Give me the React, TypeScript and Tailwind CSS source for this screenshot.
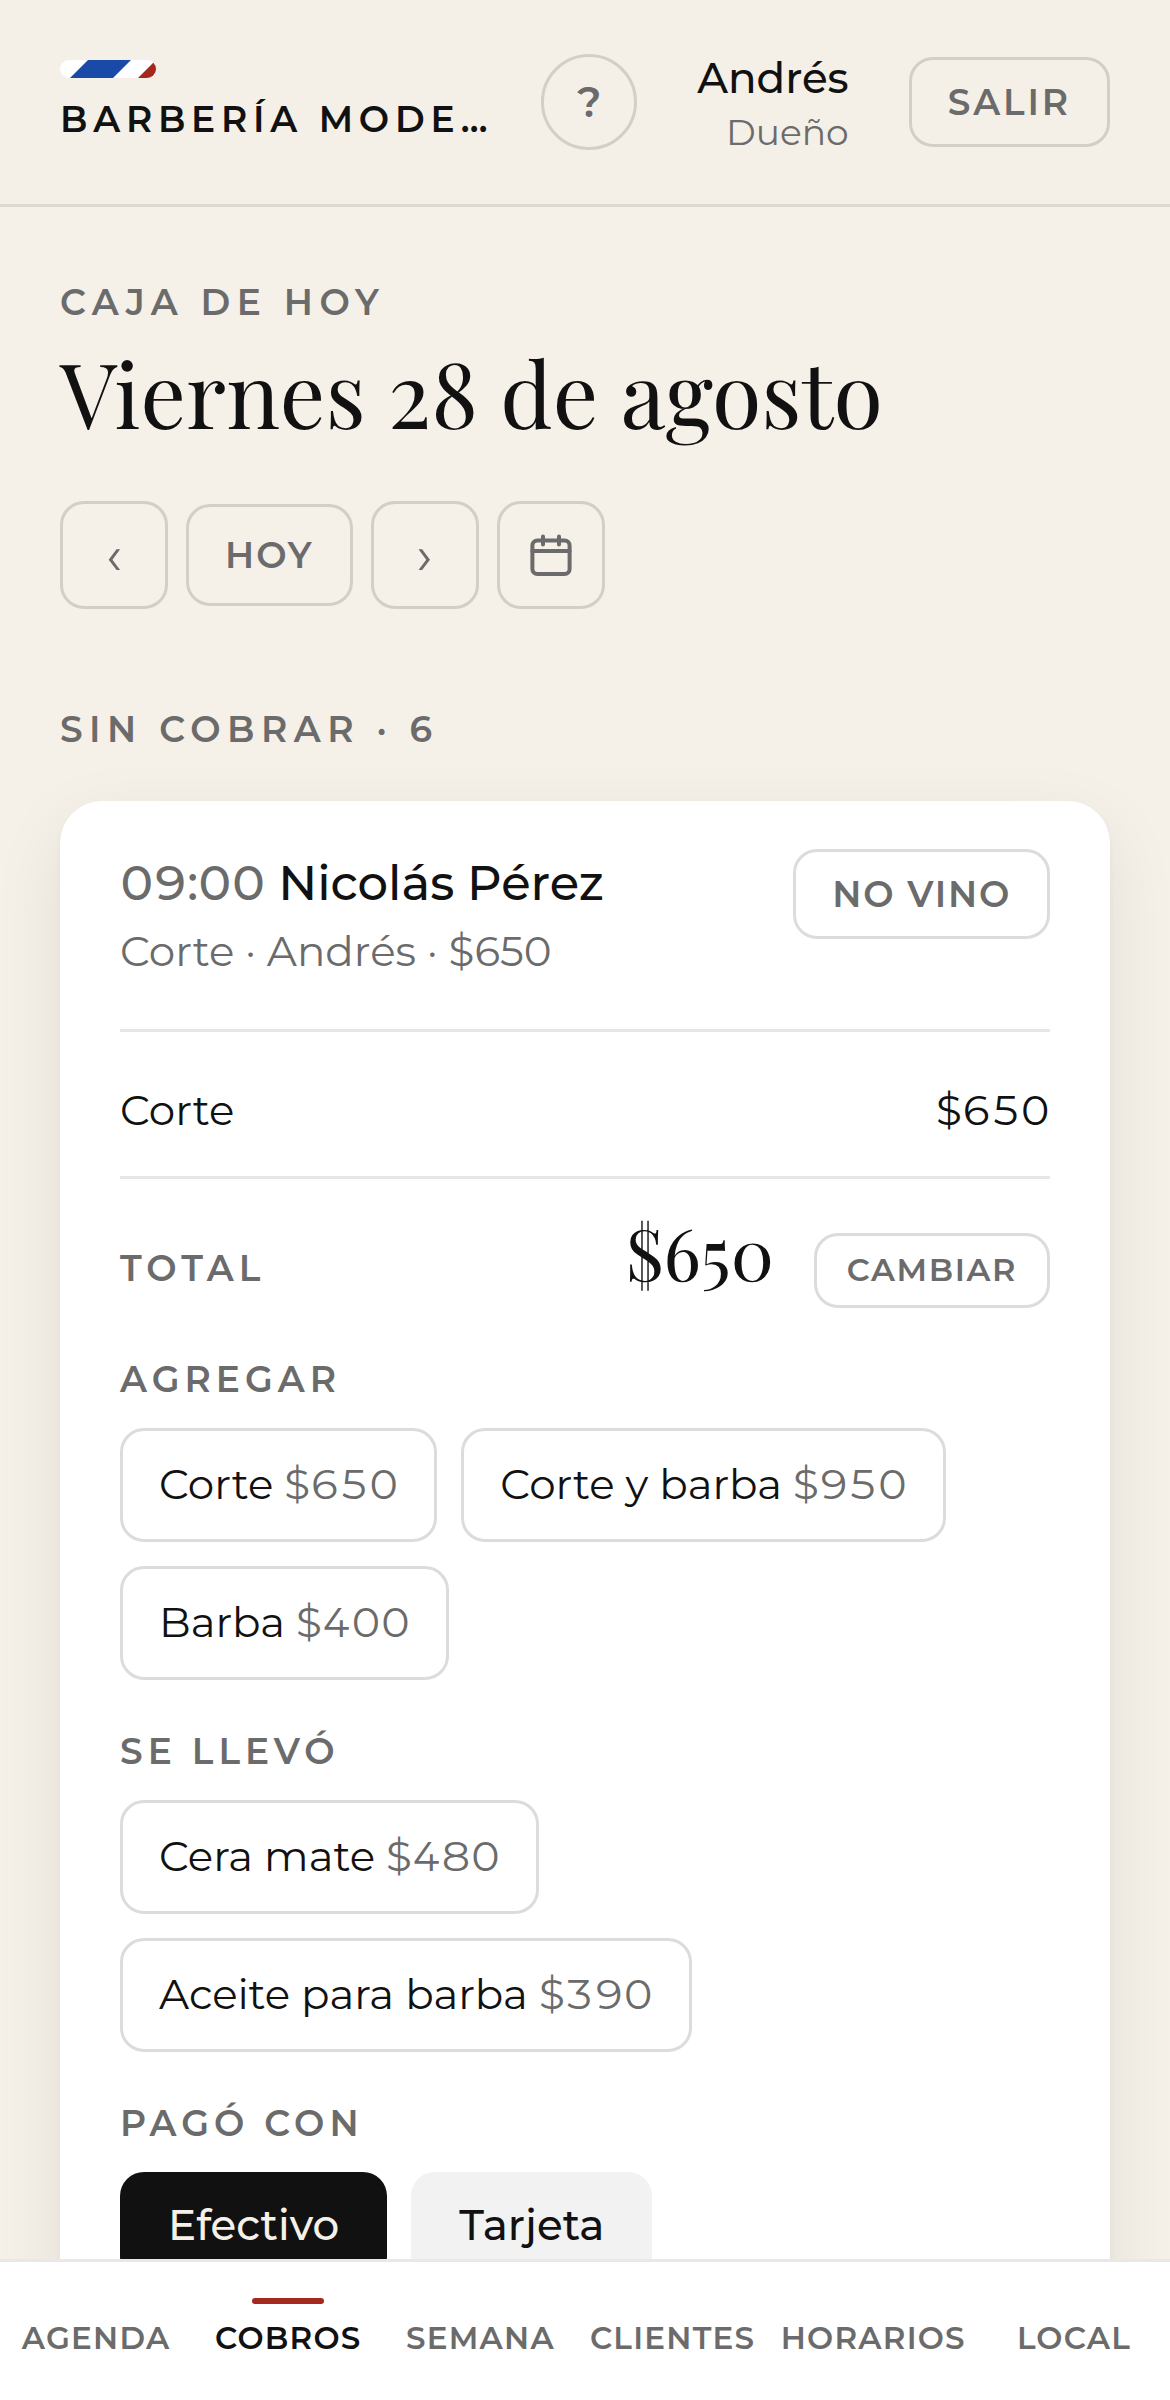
import React from "react";

const navItems = [
  { id: "agenda", label: "AGENDA" },
  { id: "cobros", label: "COBROS", active: true },
  { id: "semana", label: "SEMANA" },
  { id: "clientes", label: "CLIENTES" },
  { id: "horarios", label: "HORARIOS" },
  { id: "local", label: "LOCAL" },
];

const services = [
  { id: 1, name: "Corte", price: "$650" },
  { id: 2, name: "Corte y barba", price: "$950" },
  { id: 3, name: "Barba", price: "$400" },
];

const products = [
  { id: 1, name: "Cera mate", price: "$480" },
  { id: 2, name: "Aceite para barba", price: "$390" },
];

const payments = [
  { id: "efectivo", label: "Efectivo", active: true },
  { id: "tarjeta", label: "Tarjeta" },
];

const BarberPole = () => (
  <svg className="h-[18px] w-24 rounded-full" viewBox="0 0 96 18" aria-hidden="true">
    <rect width="96" height="18" fill="#ffffff" />
    <path d="M28 0H71L53 18H10Z" fill="#1a4aa8" />
    <path d="M96 0V18H78Z" fill="#a5281f" />
  </svg>
);

const CalendarIcon = () => (
  <svg className="h-12 w-12" viewBox="0 0 48 48" fill="none" stroke="currentColor" strokeWidth="4" strokeLinecap="round" strokeLinejoin="round" aria-hidden="true">
    <rect x="5.4" y="9.4" width="37.2" height="33.6" rx="5" />
    <path d="M5.4 20h37.2M16 5.500v8M32 5.500v8" />
  </svg>
);

const SectionLabel = ({ children }: { children: React.ReactNode }) => (
  <h2 className="text-[36px] leading-[54px] font-semibold tracking-[0.18em] text-[#6b6b6b]">{children}</h2>
);

const FieldLabel = ({ children }: { children: React.ReactNode }) => (
  <h3 className="text-[36px] leading-[54px] font-semibold tracking-[0.14em] text-[#6b6b6b]">{children}</h3>
);

const Chips = ({ items }: { items: { id: number; name: string; price: string }[] }) => (
  <div className="mt-[22px] flex flex-wrap gap-6">
    {items.map((item) => (
      <button key={item.id} type="button" className="h-[114px] rounded-3xl border-3 border-[#dcdcdc] px-9 text-[42px] text-[#111111]">
        {item.name} <span className="text-[#6b6b6b] tabular-nums">{item.price}</span>
      </button>
    ))}
  </div>
);

export default function App() {
  return (
    <div className="flex h-screen flex-col bg-[#f5f0e8] font-[Montserrat,Inter,sans-serif] text-[#111111]">
      {/* Header */}
      <header className="flex shrink-0 items-center border-b-3 border-[#ddd8d0] bg-[#f5f0e7] px-[60px] py-12">
        <div className="min-w-0 flex-1">
          <BarberPole />
          <p className="mt-4 truncate text-[36px] leading-[50px] font-semibold tracking-[0.16em]">BARBERÍA MODE…</p>
        </div>
        <button type="button" aria-label="Ayuda" className="h-24 w-24 shrink-0 rounded-full border-3 border-[#d3cec6] text-[42px] font-semibold text-[#6b6b6b]">
          ?
        </button>
        <div className="ml-[60px] text-right">
          <p className="text-[42px] leading-[60px] font-medium">Andrés</p>
          <p className="text-[36px] leading-[48px] text-[#6b6b6b]">Dueño</p>
        </div>
        <button type="button" className="ml-[60px] h-[90px] rounded-3xl border-3 border-[#d3cec6] px-9 text-[36px] font-semibold tracking-[0.08em] text-[#6b6b6b]">
          SALIR
        </button>
      </header>

      <main className="min-h-0 flex-1 overflow-hidden px-[60px] pt-[68px]">
        {/* Day picker */}
        <SectionLabel>CAJA DE HOY</SectionLabel>
        <h1 className="font-['Playfair_Display','Liberation_Serif',serif] text-[90px] leading-[126px]">Viernes 28 de agosto</h1>
        <div className="mt-[46px] flex items-center gap-[18px] text-[#6b6b6b]">
          <button type="button" aria-label="Día anterior" className="h-[108px] w-[108px] rounded-3xl border-3 border-[#d3cec6] text-[54px]">
            ‹
          </button>
          <button type="button" className="h-[102px] rounded-3xl border-3 border-[#d3cec6] px-9 text-[36px] font-semibold tracking-[0.06em]">
            HOY
          </button>
          <button type="button" aria-label="Día siguiente" className="h-[108px] w-[108px] rounded-3xl border-3 border-[#d3cec6] text-[54px]">
            ›
          </button>
          <button type="button" aria-label="Elegir fecha" className="flex h-[108px] w-[108px] items-center justify-center rounded-3xl border-3 border-[#d3cec6]">
            <CalendarIcon />
          </button>
        </div>

        <div className="mt-[93px] mb-[45px]">
          <SectionLabel>SIN COBRAR · 6</SectionLabel>
        </div>

        {/* Pending charge */}
        <article className="rounded-[42px] bg-white px-[60px] py-12 shadow-[0_3px_6px_rgba(17,17,17,0.04),0_24px_72px_rgba(17,17,17,0.08)]">
          <div className="flex items-start justify-between border-b-3 border-[#e6e6e6] pb-[47px]">
            <div>
              <p className="text-[48px] leading-[68px] font-medium">
                <span className="text-[#6b6b6b] tabular-nums">09:00</span> Nicolás Pérez
              </p>
              <p className="mt-1 text-[42px] leading-[61px] text-[#6b6b6b]">Corte · Andrés · $650</p>
            </div>
            <button type="button" className="h-[90px] rounded-3xl border-3 border-[#dcdcdc] px-9 text-[36px] font-semibold tracking-[0.05em] text-[#6b6b6b]">
              NO VINO
            </button>
          </div>

          <div className="flex justify-between border-b-3 border-[#e6e6e6] pt-12 pb-9 text-[42px] leading-[60px]">
            <span>Corte</span>
            <span className="tabular-nums">$650</span>
          </div>

          <div className="flex items-baseline pt-6">
            <FieldLabel>TOTAL</FieldLabel>
            <span className="ml-auto font-['Playfair_Display','Liberation_Serif',serif] text-[72px] leading-[96px]">$650</span>
            <button type="button" className="ml-10 h-[75px] rounded-3xl border-3 border-[#dcdcdc] px-[30px] text-[32px] font-semibold tracking-[0.05em] text-[#6b6b6b]">
              CAMBIAR
            </button>
          </div>

          <div className="mt-11">
            <FieldLabel>AGREGAR</FieldLabel>
            <Chips items={services} />
          </div>

          <div className="mt-11">
            <FieldLabel>SE LLEVÓ</FieldLabel>
            <Chips items={products} />
          </div>

          <div className="mt-11">
            <FieldLabel>PAGÓ CON</FieldLabel>
            <div className="mt-[22px] flex gap-6">
              {payments.map((payment) => (
                <button
                  key={payment.id}
                  type="button"
                  aria-pressed={!!payment.active}
                  className={`h-[108px] rounded-3xl px-12 text-[42px] font-medium ${payment.active ? "bg-[#111111] text-[#f5f0e8]" : "bg-[#f2f2f2]"}`}
                >
                  {payment.label}
                </button>
              ))}
            </div>
          </div>
        </article>
      </main>

      {/* Bottom navigation */}
      <nav className="flex shrink-0 border-t-3 border-[#e8e8e8] bg-white pt-9 pb-10">
        {navItems.map((item) => (
          <a
            key={item.id}
            href={`#${item.id}`}
            className={`flex flex-1 flex-col items-center px-3 text-[31px] leading-[44px] font-semibold tracking-[0.04em] ${item.active ? "text-[#111111]" : "text-[#6b6b6b]"}`}
          >
            <span className={`mb-3 h-[6px] w-[72px] rounded-full ${item.active ? "bg-[#a5281f]" : ""}`} />
            {item.label}
          </a>
        ))}
      </nav>
    </div>
  );
}
